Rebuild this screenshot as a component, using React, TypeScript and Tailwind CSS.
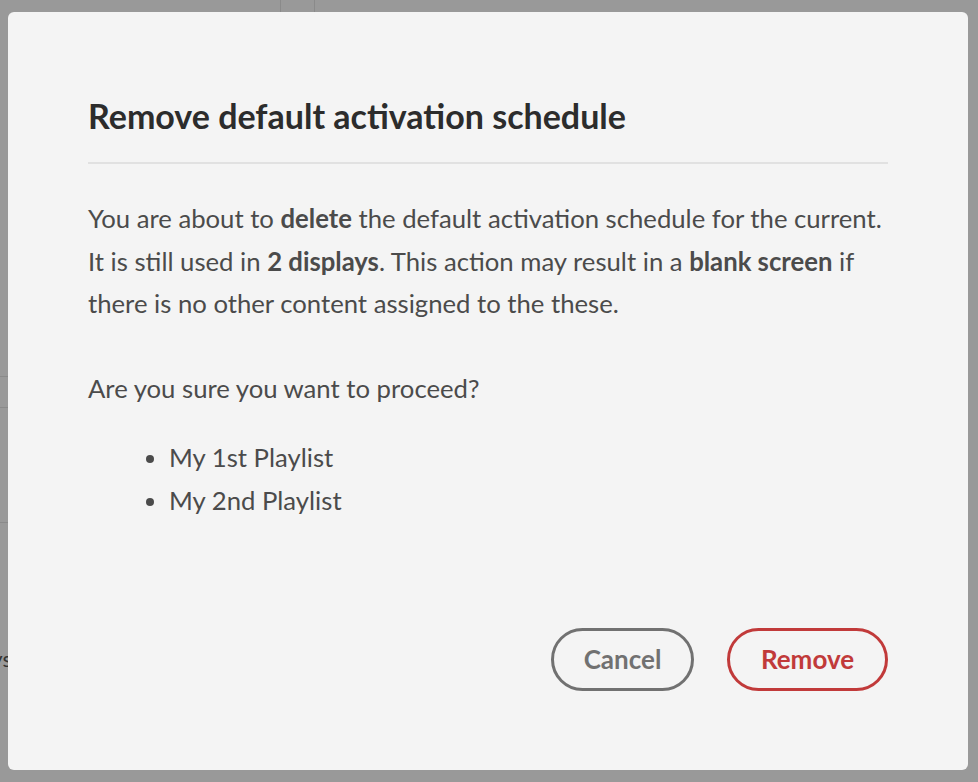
import React from "react";

const font = { fontFamily: "Lato, 'Open Sans', sans-serif" };

function Backdrop() {
  // faint page content showing through the overlay
  return (
    <div className="pointer-events-none absolute inset-0">
      <div className="absolute top-0 left-[280px] h-[12px] w-px bg-[#8a8a8a]" />
      <div className="absolute top-0 left-[314px] h-[12px] w-px bg-[#8a8a8a]" />
      <div className="absolute top-[376px] left-0 h-px w-[8px] bg-[#8a8a8a]" />
      <div className="absolute top-[407px] left-0 h-px w-[8px] bg-[#8a8a8a]" />
      <div className="absolute top-[522px] left-0 h-px w-[8px] bg-[#8a8a8a]" />
      <span className="absolute top-[642px] right-[966px] text-[22px] whitespace-nowrap text-[#333]">
        Displays
      </span>
    </div>
  );
}

export default function App() {
  return (
    <div
      className="relative h-[782px] w-[978px] overflow-hidden bg-[#999999] pt-[12px] pl-[8px]"
      style={font}
    >
      <Backdrop />
      <div className="relative flex h-[758px] w-[960px] flex-col rounded-[6px] bg-[#f4f4f4] px-[80px] pt-[86px] pb-[79px]">
        <h1 className="text-[34px] leading-[36px] font-bold text-[#2c2c2c]">
          Remove default activation schedule
        </h1>
        <div className="mt-[28px] h-[2px] w-full bg-[#e1e1e1]" />
        <div className="mt-[33px] text-[25.7px] leading-[42.5px] text-[#4b4b4b]">
          <p>
            You are about to <b className="font-bold">delete</b> the default
            activation schedule for the current. It is still used in{" "}
            <b className="font-bold">2 displays</b>. This action may result in a{" "}
            <b className="font-bold">blank screen</b> if there is no other content
            assigned to the these.
          </p>
          <p className="mt-[42px]">Are you sure you want to proceed?</p>
          <ul className="mt-[27px] list-disc pl-[81px] marker:text-[#4b4b4b]">
            <li>My 1st Playlist</li>
            <li>My 2nd Playlist</li>
          </ul>
        </div>
        <div className="mt-auto flex justify-end gap-[33px]">
          <button className="h-[63px] w-[143px] rounded-full border-[3px] border-[#717171] text-[26px] font-bold text-[#717171]">
            Cancel
          </button>
          <button className="h-[63px] w-[161px] rounded-full border-[3px] border-[#c13a3a] text-[26px] font-bold text-[#c13a3a]">
            Remove
          </button>
        </div>
      </div>
    </div>
  );
}
